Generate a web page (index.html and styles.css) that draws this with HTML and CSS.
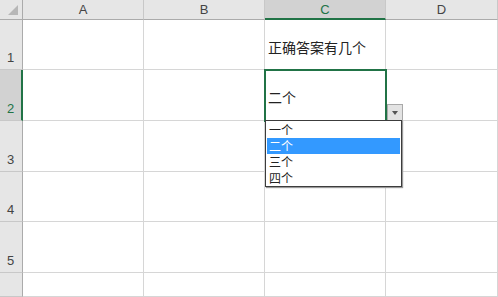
FILE: index.html
```html
<!DOCTYPE html>
<html lang="zh-CN">
<head>
    <meta charset="UTF-8">
    <title>数据验证</title>
    <link rel="stylesheet" href="styles.css">
</head>
<body>
    <div class="sheet">
        <div class="corner"><span class="corner-mark"></span></div>
        <div class="col-head">A</div>
        <div class="col-head">B</div>
        <div class="col-head active">C</div>
        <div class="col-head">D</div>

        <div class="row-head">1</div>
        <div class="cell"></div>
        <div class="cell"></div>
        <div class="cell text">正确答案有几个</div>
        <div class="cell"></div>

        <div class="row-head active">2</div>
        <div class="cell"></div>
        <div class="cell"></div>
        <div class="cell text selected">
            二个
            <span class="drop-btn"><span class="arrow"></span></span>
            <ul class="drop-list">
                <li>一个</li>
                <li class="picked">二个</li>
                <li>三个</li>
                <li>四个</li>
            </ul>
        </div>
        <div class="cell"></div>

        <div class="row-head">3</div>
        <div class="cell"></div>
        <div class="cell"></div>
        <div class="cell"></div>
        <div class="cell"></div>

        <div class="row-head">4</div>
        <div class="cell"></div>
        <div class="cell"></div>
        <div class="cell"></div>
        <div class="cell"></div>

        <div class="row-head">5</div>
        <div class="cell"></div>
        <div class="cell"></div>
        <div class="cell"></div>
        <div class="cell"></div>

        <div class="row-head"></div>
        <div class="cell"></div>
        <div class="cell"></div>
        <div class="cell"></div>
        <div class="cell"></div>
    </div>
</body>
</html>
```

FILE: styles.css
```css
html, body
{
    margin: 0;
    padding: 0;
    height: 100%;
    overflow: hidden;
}
body
{
    background: #fff;
    font-family: "Noto Sans CJK SC", "Liberation Sans", sans-serif;
    color: #222;
}
.sheet
{
    display: grid;
    grid-template-columns: 23px 121px 121px 121px 1fr;
    grid-template-rows: 20px 50px 51px 51px 50px 51px 1fr;
    height: 100%;
}
.corner, .col-head, .row-head, .cell
{
    border-right: 1px solid #d6d6d6;
    border-bottom: 1px solid #d6d6d6;
}
.corner
{
    background: #e6e6e6;
    border-right-color: #ababab;
    border-bottom-color: #ababab;
    position: relative;
}
.corner-mark
{
    position: absolute;
    right: 4px;
    bottom: 4px;
    width: 0;
    height: 0;
    border-left: 10px solid transparent;
    border-bottom: 10px solid #b7b7b7;
}
.col-head
{
    background: #e6e6e6;
    border-bottom-color: #ababab;
    border-right-color: #c8c8c8;
    display: flex;
    align-items: center;
    justify-content: center;
    font-family: "Liberation Sans", sans-serif;
    font-size: 13px;
    color: #444;
}
.col-head.active
{
    background: #d2d2d2;
    border-bottom: 2px solid #217346;
    color: #217346;
}
.row-head
{
    background: #e6e6e6;
    border-right-color: #ababab;
    border-bottom-color: #c8c8c8;
    display: flex;
    align-items: flex-end;
    padding: 0 0 4px 7px;
    font-family: "Liberation Sans", sans-serif;
    font-size: 13px;
    color: #444;
}
.row-head.active
{
    background: #d2d2d2;
    border-right: 2px solid #217346;
    color: #217346;
}
.cell.text
{
    display: flex;
    align-items: center;
    padding: 4px 0 0 3px;
    font-size: 14px;
    color: #222;
}
.cell.selected
{
    position: relative;
    outline: 2px solid #217346;
    outline-offset: -1px;
    z-index: 1;
}
.drop-btn
{
    position: absolute;
    left: 100%;
    bottom: -1px;
    width: 16px;
    height: 17px;
    background: #e3e3e3;
    border: 1px solid #a9a9a9;
    box-sizing: border-box;
    display: flex;
    align-items: center;
    justify-content: center;
    margin-left: 2px;
}
.arrow
{
    width: 0;
    height: 0;
    border-left: 3px solid transparent;
    border-right: 3px solid transparent;
    border-top: 4px solid #555;
}
.drop-list
{
    position: absolute;
    top: 100%;
    left: 0;
    width: 137px;
    margin: 0;
    padding: 1px 1px 0 1px;
    list-style: none;
    background: #fff;
    border: 1px solid #3c3c3c;
    box-sizing: border-box;
    box-shadow: 1px 1px 1px #9a9a9a;
    z-index: 2;
}
.drop-list li
{
    height: 16px;
    line-height: 16px;
    padding-left: 2px;
    font-size: 12px;
    color: #222;
}
.drop-list li.picked
{
    background: #3399ff;
    color: #fff;
}
```
